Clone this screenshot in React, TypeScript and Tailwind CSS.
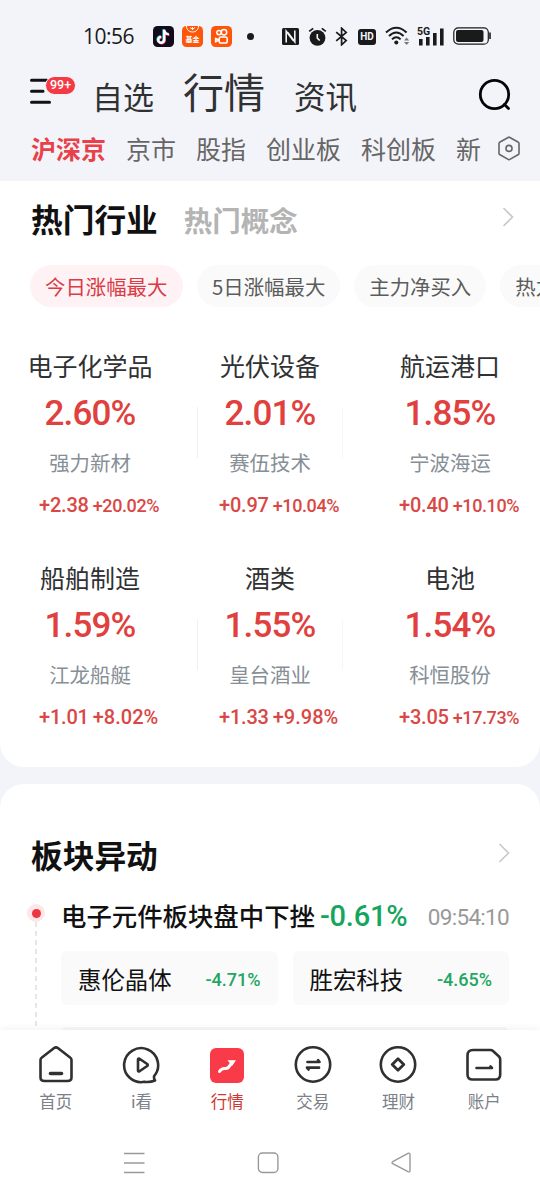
import type { ReactNode } from 'react';
import clsx from 'clsx';

const CJK = "font-['Noto_Sans_CJK_SC',sans-serif]";
const NUM = "font-['Roboto',sans-serif]";

interface Sector {
  name: string;
  percent: string;
  stock: string;
  change: string;
  changePercent: string;
}

const sectors: Sector[] = [
  { name: '电子化学品', percent: '2.60%', stock: '强力新材', change: '+2.38', changePercent: '+20.02%' },
  { name: '光伏设备', percent: '2.01%', stock: '赛伍技术', change: '+0.97', changePercent: '+10.04%' },
  { name: '航运港口', percent: '1.85%', stock: '宁波海运', change: '+0.40', changePercent: '+10.10%' },
  { name: '船舶制造', percent: '1.59%', stock: '江龙船艇', change: '+1.01', changePercent: '+8.02%' },
  { name: '酒类', percent: '1.55%', stock: '皇台酒业', change: '+1.33', changePercent: '+9.98%' },
  { name: '电池', percent: '1.54%', stock: '科恒股份', change: '+3.05', changePercent: '+17.73%' },
];

const marketTabs = ['沪深京', '京市', '股指', '创业板', '科创板', '新三板'];
const filters = ['今日涨幅最大', '5日涨幅最大', '主力净买入', '热力图'];

function StatusBar() {
  return (
    <div className="flex h-[72px] items-center pl-[83px] text-[#1a1a1a]">
      <span className="w-[70px] font-['Open_Sans',sans-serif] text-[21px] leading-none tracking-[-0.5px]">10:56</span>
      <div className="flex items-center gap-2">
        {/* Douyin */}
        <svg width="21" height="21" viewBox="0 0 21 21">
          <rect width="21" height="21" rx="4.5" fill="#100c1c" />
          <g fill="none" strokeWidth="2.4">
            <path d="M10.6 3.2v10.2a3 3 0 1 1-3-3M10.6 3.6c.3 2.6 2.2 4.1 4.7 4.3" stroke="#25f4ee" />
            <path d="M11.8 4.2v10.2a3 3 0 1 1-3-3M11.8 4.6c.3 2.6 2.2 4.1 4.7 4.3" stroke="#fe2c55" />
            <path d="M11.2 3.7v10.2a3 3 0 1 1-3-3M11.2 4.1c.3 2.6 2.2 4.1 4.7 4.3" stroke="#fff" />
          </g>
        </svg>
        {/* Fund app */}
        <div className="relative h-[21px] w-[21px] overflow-hidden rounded-[4.5px] bg-[#fd560a]">
          <svg width="21" height="8" viewBox="0 0 21 8" fill="none" stroke="#fff" strokeWidth="1">
            <path d="M4.5 0c0 3.5 2.5 6 6 6s6-2.5 6-6M8 1.500l2.500 1.800 2.500-1.800M10.500 1v3" />
          </svg>
          <span className={clsx(CJK, 'absolute left-[3.5px] top-[10px] whitespace-nowrap text-[7px] font-bold leading-none text-white')}>基金</span>
        </div>
        {/* Kuaishou */}
        <svg width="21" height="21" viewBox="0 0 21 21">
          <rect width="21" height="21" rx="4.5" fill="#fd560a" />
          <g fill="none" stroke="#fff" strokeWidth="1.5">
            <circle cx="8" cy="6.6" r="2.2" />
            <circle cx="13" cy="6.2" r="2.7" />
            <rect x="8.2" y="11" width="8" height="6" rx="1.8" />
            <path d="M8 14l-3.400-1.700v3.600z" strokeLinejoin="round" />
          </g>
        </svg>
      </div>
      <span className="ml-[15px] h-[7px] w-[7px] rounded-full bg-[#1a1a1a]" />
      {/* NFC */}
      <svg className="ml-7" width="17" height="17" viewBox="0 0 17 17">
        <rect width="17" height="17" rx="1.5" fill="#1a1a1a" />
        <path d="M4.2 14.5V3.2l7 9.2M12.8 2.5v11.3l-7-9.2" fill="none" stroke="#f3f4f9" strokeWidth="1.6" />
      </svg>
      {/* Alarm */}
      <svg className="ml-[9px]" width="19" height="19" viewBox="0 0 19 19">
        <circle cx="9.5" cy="10.8" r="7.9" fill="#1a1a1a" />
        <path d="M9.3 7v4.2l2.4 2.3" fill="none" stroke="#f3f4f9" strokeWidth="1.6" />
        <path d="M1.2 4.4l4-3M17.8 4.4l-4-3" stroke="#1a1a1a" strokeWidth="1.8" />
      </svg>
      {/* Bluetooth */}
      <svg className="ml-2" width="13" height="19" viewBox="0 0 13 19">
        <path d="M1.2 5.2l10 8.4-4.6 4.2V1.2l4.6 4.2-10 8.4" fill="none" stroke="#1a1a1a" strokeWidth="1.7" />
      </svg>
      <span className="ml-[10px] mt-[2px] flex h-[16px] w-[18px] items-center justify-center rounded-[3px] bg-[#1a1a1a] font-['Roboto',sans-serif] text-[10px] font-bold leading-none text-[#f3f4f9]">HD</span>
      {/* Wi-Fi */}
      <svg className="ml-[9px]" width="25" height="20" viewBox="0 0 25 20">
        <g fill="none" stroke="#1a1a1a" strokeWidth="2">
          <path d="M1 6.5q10.3-9.6 20.6 0" />
          <path d="M4 10q7.3-7 14.6 0" />
          <path d="M7 13.4q4.3-4.2 8.6 0" />
        </g>
        <circle cx="11.3" cy="16.6" r="2" fill="#1a1a1a" />
        <path d="M19 14.400l2.600-3 2.600 3zM19 16l2.600 3 2.600-3z" fill="#777" />
      </svg>
      {/* Signal */}
      <div className="relative ml-[7px] h-[19px] w-[27px]">
        <svg width="27" height="19" viewBox="0 0 27 19" fill="#1a1a1a">
          <path d="M2 12h3.6v6.500H2zM9 10h3.6v8.500H9zM16 6h3.6v12.500H16zM23 1.500h3.6v17H23z" />
        </svg>
        <span className="absolute left-0 top-0 bg-[#f3f4f9] font-['Roboto',sans-serif] text-[10.5px] font-bold leading-[9px]">5G</span>
      </div>
      {/* Battery */}
      <svg className="ml-[9px]" width="38" height="18" viewBox="0 0 38 18">
        <rect x=".8" y=".8" width="34.500" height="16.400" rx="4.500" fill="none" stroke="#1a1a1a" strokeWidth="1.200" />
        <rect x="3" y="3" width="27.500" height="12" rx="2" fill="#1a1a1a" />
        <path d="M37 5.500v6.500" stroke="#1a1a1a" strokeWidth="1.600" />
      </svg>
    </div>
  );
}

function Header() {
  return (
    <div className={clsx(CJK, 'flex h-[46px] items-end text-[#303133]')}>
      <button type="button" className="relative ml-[29px] flex h-[42px] w-[63px] items-start" aria-label="菜单">
        <svg width="24" height="30" viewBox="0 0 24 30" className="mt-[2px]" stroke="#111" strokeWidth="3" strokeLinecap="round">
          <path d="M2.500 2.300H18M2.500 13.300H14M2.500 24.300h18" />
        </svg>
        <span className="absolute left-[16px] top-0 flex h-[19px] w-[31px] items-center justify-center rounded-full border border-[#f3f4f9] bg-[#f43b45] font-['Roboto',sans-serif] text-[12.500px] font-medium leading-none text-white">
          99+
        </span>
      </button>
      <span className="pb-[7px] text-[31px] leading-none">自选</span>
      <span className="ml-[29px] pb-[7px] text-[41px] leading-none">行情</span>
      <span className="ml-[29px] pb-[7px] text-[31.500px] leading-none">资讯</span>
      <svg className="mb-[6px] ml-auto mr-[28px]" width="34" height="34" viewBox="0 0 34 34" fill="none" stroke="#050505" strokeWidth="2.800" strokeLinecap="round">
        <circle cx="16.500" cy="16.500" r="14.200" />
        <path d="M26.500 26.500l4 4" />
      </svg>
    </div>
  );
}

function MarketTabs() {
  return (
    <div className={clsx(CJK, 'flex h-[63px] items-center pl-[31px] text-[#666]')}>
      <div className="mb-[4px] flex w-[451px] gap-5 overflow-hidden whitespace-nowrap text-[25px] leading-[36px]">
        {marketTabs.map((tab, i) => (
          <span key={tab} className={clsx('shrink-0', i === 0 && 'font-bold text-[#e8414a]')}>
            {tab}
          </span>
        ))}
      </div>
      <svg className="mb-[2px] ml-[15px]" width="24" height="25" viewBox="0 0 24 25" fill="none" stroke="#666" strokeWidth="1.600" strokeLinejoin="round">
        <path d="M11.600 1.200q.4-.2.8 0l9 5.100q.6.4.6 1v10.200q0 .6-.6 1l-9 5.100q-.4.2-.8 0l-9-5.100q-.6-.4-.6-1V7.300q0-.6.6-1z" />
        <circle cx="12" cy="12.400" r="3" />
      </svg>
    </div>
  );
}

function Chevron({ className }: { className?: string }) {
  return (
    <svg className={className} width="12" height="20" viewBox="0 0 12 20" fill="none" stroke="#c8c8c8" strokeWidth="1.600">
      <path d="M1.500 1l9 9-9 9" />
    </svg>
  );
}

function SectorCell({ sector, divider }: { sector: Sector; divider?: ReactNode }) {
  return (
    <div className="relative flex h-[211.5px] flex-col items-center">
      <span className={clsx(CJK, 'h-[48px] text-[25px] leading-[48px] text-[#303133]')}>{sector.name}</span>
      <span className={clsx(NUM, 'h-[49px] text-[35px] font-medium leading-[49px] tracking-[-0.8px] text-[#e0403e]')}>
        {sector.percent}
      </span>
      <span className={clsx(CJK, 'h-[48px] text-[20.400px] leading-[48px] text-[#868e96]')}>{sector.stock}</span>
      <div className={clsx(NUM, 'flex h-[38px] items-baseline gap-1 self-start whitespace-nowrap pl-[39px] font-medium leading-[38px] text-[#d94845]')}>
        <span className="text-[20px] tracking-[-0.2px]">{sector.change}</span>
        {/* shorter values keep the larger size, longer ones shrink to fit */}
        <span className={sector.changePercent.length > 6 ? 'text-[18px] tracking-[-0.4px]' : 'text-[20px]'}>
          {sector.changePercent}
        </span>
      </div>
      {divider}
    </div>
  );
}

function HotSectors() {
  return (
    <section className={clsx(CJK, 'h-[586px] overflow-hidden rounded-b-[24px] bg-white')}>
      <div className="flex h-[76px] items-center pl-[31px] pr-[26px]">
        <h2 className="mb-px text-[31.700px] font-bold leading-none text-[#111]">热门行业</h2>
        <h2 className="ml-[26px] mt-[2px] text-[28.500px] font-bold leading-none text-[#b4b4b4]">热门概念</h2>
        <Chevron className="mb-[5px] ml-auto" />
      </div>
      <div className="flex gap-[14px] pl-[30px] pt-2">
        {filters.map((filter, i) => (
          <span
            key={filter}
            className={clsx(
              'flex h-[42px] shrink-0 items-center rounded-full px-[15px] text-[20.400px] leading-none',
              i === 0 ? 'w-[153px] bg-[#fff2f4] text-[#d93c48]' : 'bg-[#fafafa] text-[#5c5c5c]',
            )}
          >
            {filter}
          </span>
        ))}
      </div>
      <div className="mt-[34px] grid grid-cols-3">
        {sectors.map((sector, i) => (
          <SectorCell
            key={sector.name}
            sector={sector}
            divider={
              i % 3 === 1 && (
                <>
                  <i className="absolute left-[17px] top-[66px] h-[51px] w-px bg-[#f0f0f0]" />
                  <i className="absolute left-[162px] top-[66px] h-[51px] w-px bg-[#f7f7f7]" />
                </>
              )
            }
          />
        ))}
      </div>
    </section>
  );
}

function StockTag({ name, percent }: { name: string; percent: string }) {
  return (
    <div className="flex h-[54px] flex-1 items-center justify-between rounded-md bg-[#fafafa] px-[17px] pt-[3px]">
      <span className="text-[23.400px] leading-none text-[#111]">{name}</span>
      <span className={clsx(NUM, 'text-[18px] font-medium leading-none text-[#23a662]')}>{percent}</span>
    </div>
  );
}

function SectorMoves() {
  return (
    <section className={clsx(CJK, 'mt-[17px] h-[246px] overflow-hidden rounded-t-[24px] bg-white')}>
      <div className="flex items-center pl-[31px] pr-[30px] pt-[54px]">
        <h2 className="text-[31.700px] font-bold leading-[32px] text-[#111]">板块异动</h2>
        <Chevron className="mb-[3px] ml-auto" />
      </div>
      <div className="mt-[34px] flex">
        <div className="flex w-[61px] flex-col items-start pl-[27px]">
          <span className="flex h-[18px] w-[18px] items-center justify-center rounded-full bg-[#ffe6e8]">
            <span className="h-[9px] w-[9px] rounded-full bg-[#ee3642]" />
          </span>
          <svg className="ml-2" width="2" height="110" viewBox="0 0 2 110" stroke="#d6d6d6" strokeWidth="1.200" strokeDasharray="5 4">
            <path d="M1 0v110" />
          </svg>
        </div>
        <div className="w-[448px]">
          <div className="flex h-[23px] items-center whitespace-nowrap">
            <span className="text-[25.400px] font-medium leading-none text-[#111]">电子元件板块盘中下挫</span>
            <span className={clsx(NUM, 'ml-[5px] mt-px text-[29px] font-medium leading-none tracking-[-0.2px] text-[#16a55c]')}>-0.61%</span>
            <span className={clsx(NUM, 'ml-auto mt-[4px] text-[22.500px] leading-none tracking-[-0.7px] text-[#999]')}>09:54:10</span>
          </div>
          <div className="mt-[24px] flex gap-[15px]">
            <StockTag name="惠伦晶体" percent="-4.71%" />
            <StockTag name="胜宏科技" percent="-4.65%" />
          </div>
          <div className="mt-[22px] h-[40px] rounded-md bg-[#f7f7f7]" />
        </div>
      </div>
    </section>
  );
}

const navItems: { label: string; icon: ReactNode }[] = [
  {
    label: '首页',
    icon: (
      <>
        <path d="M16.800 3.200L4.600 12.700Q3.500 13.500 3.500 15V32.500Q3.500 36 7.500 36H30.500Q34.500 36 34.500 32.500V15Q34.500 13.500 33.400 12.700L21.200 3.200Q19 1.500 16.800 3.200Z" />
        <path d="M13.500 28.500h11" strokeWidth="3.600" />
      </>
    ),
  },
  {
    label: 'i看',
    icon: (
      <>
        <path d="M32.200 31A17 17 0 1 0 22.500 36.800Q28 37.500 33 35.500Q31.500 33 32.200 31" />
        <path d="M16 14.500v11q0 1.500 1.500.8l7.700-5.300q1-1 0-2l-7.700-5.300q-1.500-.7-1.500.8z" />
      </>
    ),
  },
  {
    label: '行情',
    icon: (
      <>
        <rect x="2" y="3" width="34" height="35" rx="6" fill="#f93b49" stroke="none" />
        <path d="M11.500 26.500q2-3.200 5.500-3 3 .2 4.500-2.500l3-4" stroke="#fff" strokeWidth="3" />
        <path d="M19.500 15.200h8.500l-4 5.800z" fill="#fff" stroke="none" />
      </>
    ),
  },
  {
    label: '交易',
    icon: (
      <>
        <circle cx="19" cy="19.500" r="17.200" />
        <path d="M13.500 17h12l-1.500-1.800M25 22.700H13l1.500 1.800" strokeWidth="2.700" />
      </>
    ),
  },
  {
    label: '理财',
    icon: (
      <>
        <circle cx="19" cy="19.500" r="17.200" />
        <path d="M19 13.800l5.800 5.700-5.800 5.700-5.800-5.700z" strokeWidth="2.800" />
      </>
    ),
  },
  {
    label: '账户',
    icon: (
      <>
        <path d="M8 5H25.500Q27 5 28 6L34 11.500Q35.200 12.700 35.200 14.500V29.500Q35.200 34.500 30.500 34.500H7.500Q2.500 34.500 2.500 29.500V10.500Q2.500 5 8 5Z" />
        <path d="M11.500 23h15.500l-1.500-1.500" />
      </>
    ),
  },
];

function BottomNav() {
  return (
    <nav className={clsx(CJK, 'relative grid h-[90px] grid-cols-6 bg-white px-[13px] shadow-[0_-1px_8px_rgba(0,0,0,0.06)]')}>
      {navItems.map(({ label, icon }) => (
        <div key={label} className="flex flex-col items-center pt-[15px]">
          <svg width="38" height="40" viewBox="0 0 38 40" fill="none" stroke="#303030" strokeWidth="2.600" strokeLinecap="round" strokeLinejoin="round">
            {icon}
          </svg>
          <span className={clsx('mt-[8px] text-[16.500px] leading-[17px]', label === '行情' ? 'text-[#cf3734]' : 'text-[#7c8087]')}>
            {label}
          </span>
        </div>
      ))}
    </nav>
  );
}

function SystemBar() {
  return (
    <div className="relative flex h-[80px] items-start bg-white pt-[32px]">
      <svg className="ml-[123px]" width="22" height="22" viewBox="0 0 22 22" stroke="#999" strokeWidth="1.500">
        <path d="M1 1.500h20.500M1 11h20.500M1 20.500h20.500" />
      </svg>
      <svg className="ml-[112px]" width="22" height="22" viewBox="0 0 22 22" fill="none" stroke="#999" strokeWidth="1.400">
        <rect x="1.400" y="1" width="19.500" height="19.500" rx="4" />
      </svg>
      <svg className="ml-[111px]" width="21" height="22" viewBox="0 0 21 22" fill="none" stroke="#999" strokeWidth="1.400" strokeLinejoin="round">
        <path d="M2.700 9.700L18 1.300Q20 .5 20 2.700V18.300Q20 20.500 18 19.700L2.700 11.700Q1.300 10.700 2.700 9.700Z" />
      </svg>
    </div>
  );
}

export default function App() {
  return (
    <div className="h-[1200px] w-[540px] overflow-hidden bg-[#f3f4f9]">
      <StatusBar />
      <Header />
      <MarketTabs />
      <HotSectors />
      <SectorMoves />
      <BottomNav />
      <SystemBar />
    </div>
  );
}
